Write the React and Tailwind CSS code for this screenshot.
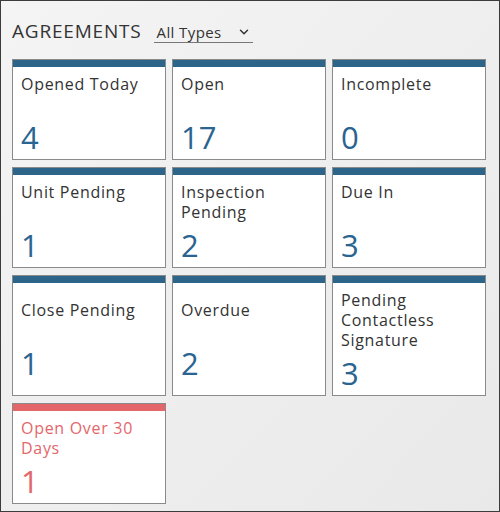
import { ChevronDown } from "lucide-react";

const cards = [
  { title: "Opened Today", value: "4" },
  { title: "Open", value: "17" },
  { title: "Incomplete", value: "0" },
  { title: "Unit Pending", value: "1" },
  { title: "Inspection Pending", value: "2" },
  { title: "Due In", value: "3" },
  { title: "Close Pending", value: "1" },
  { title: "Overdue", value: "2" },
  { title: "Pending Contactless Signature", value: "3" },
  { title: "Open Over 30 Days", value: "1", alert: true },
];

function Card({ title, value, alert }) {
  return (
    <div className="bg-white border border-[#8a8a8a] flex flex-col min-h-[101px]">
      <div className={alert ? "h-[7px] bg-[#e3666b]" : "h-[7px] bg-[#2d6489]"} />
      <div className="flex flex-col flex-1 justify-center pl-[8px] pr-2 pt-[7px] pb-[6px]">
        <div
          className={`min-h-[40px] text-[16px] leading-[20px] tracking-[0.7px] ${
            alert ? "text-[#e3666b]" : "text-[#333333]"
          }`}
        >
          {title}
        </div>
        <div
          className={`text-[31px] leading-[32px] mt-[7px] ${
            alert ? "text-[#e3666b]" : "text-[#2a6490]"
          }`}
        >
          {value}
        </div>
      </div>
    </div>
  );
}

export default function App() {
  return (
    <div
      className="w-[500px] h-[512px] border border-[#3c3c3c] bg-gradient-to-br from-[#f4f4f4] to-[#e9e9e9] overflow-hidden"
      style={{ fontFamily: '"Open Sans", "Noto Sans", sans-serif' }}
    >
      <div className="flex items-center px-[11px] pt-[15px] h-[45px]">
        <h1 className="text-[19px] text-[#333333] tracking-[0.8px] leading-none">AGREEMENTS</h1>
        <div className="ml-[12px] flex items-center justify-between w-[99px] border-b border-[#777] pl-[3px] pr-[2px] mt-[2px]">
          <span className="text-[15px] leading-[20px] tracking-[0.4px] text-[#333333]">All Types</span>
          <ChevronDown size={14} strokeWidth={2.5} className="text-[#333]" />
        </div>
      </div>
      <div className="grid grid-cols-3 gap-x-[6px] gap-y-[7px] ml-[11px] mt-[13px] w-[474px]">
        {cards.map((c) => (
          <Card key={c.title} {...c} />
        ))}
      </div>
    </div>
  );
}
